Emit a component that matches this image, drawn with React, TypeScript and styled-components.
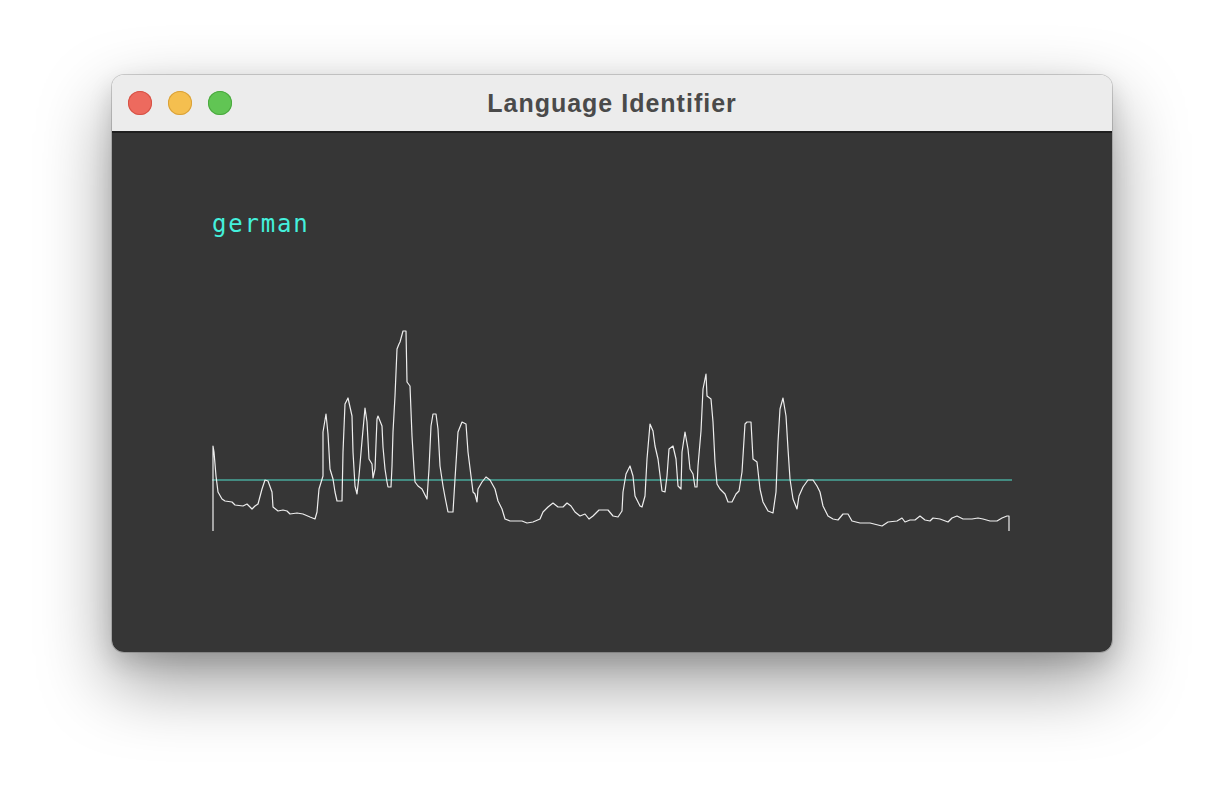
import React from 'react'
import styled, { createGlobalStyle } from 'styled-components'

const GlobalStyle = createGlobalStyle`
    html, body {
        margin: 0;
        padding: 0;
        background: #ffffff;
    }
    * {
        box-sizing: border-box;
    }
`

const StyledDesktop = styled.div`
    width: 1224px;
    height: 800px;
    display: flex;
    justify-content: center;
    align-items: flex-start;
    padding-top: 75px;
    background: #ffffff;
    overflow: hidden;
`

const StyledWindow = styled.div`
    width: 1000px;
    display: flex;
    flex-direction: column;
    border-radius: 12px;
    overflow: hidden;
    box-shadow:
        0 0 0 1px rgba(0, 0, 0, 0.16),
        0 30px 72px rgba(0, 0, 0, 0.4),
        0 10px 24px rgba(0, 0, 0, 0.14);
`

const StyledTitleBar = styled.div`
    position: relative;
    height: 58px;
    display: flex;
    align-items: center;
    justify-content: center;
    background: #ececec;
    border-bottom: 2px solid #1f1f1f;
`

const StyledLights = styled.div`
    position: absolute;
    left: 16px;
    top: 16px;
    display: flex;
    gap: 16px;
`

const StyledLight = styled.span<{ $color: string; $edge: string }>`
    display: block;
    width: 24px;
    height: 24px;
    border-radius: 50%;
    background: ${(p) => p.$color};
    box-shadow: inset 0 0 0 1px ${(p) => p.$edge};
`

const StyledTitle = styled.div`
    font-family: 'Liberation Sans', Arial, sans-serif;
    font-weight: bold;
    font-size: 25px;
    letter-spacing: 1px;
    color: #4a4a4a;
`

const StyledCanvas = styled.div`
    height: 519px;
    background: #363636;
    display: flex;
    flex-direction: column;
    padding: 79px 0 0 88px;
`

const StyledLabel = styled.div`
    margin-left: 12px;
    font-family: 'DejaVu Sans Mono', 'Liberation Mono', monospace;
    font-size: 24px;
    line-height: 24px;
    letter-spacing: 1.8px;
    color: #44f0dc;
`

const StyledChart = styled.svg`
    display: block;
    margin-top: 83px;
`

const wave = [
    [213, 532], [213, 447], [214, 453], [216, 477], [218, 493], [222, 500], [225, 502],
    [232, 503], [235, 506], [243, 507], [247, 505], [252, 510], [255, 507], [258, 505],
    [262, 490], [265, 481], [268, 482], [272, 493], [273, 508], [278, 512], [283, 511],
    [287, 512], [290, 515], [297, 514], [303, 515], [310, 518], [315, 520], [317, 513],
    [319, 490], [323, 477], [323, 433], [326, 415], [328, 435], [330, 470], [333, 480],
    [335, 493], [337, 502], [342, 502], [343, 453], [345, 405], [348, 399], [352, 417],
    [353, 453], [355, 487], [357, 495], [359, 477], [362, 442], [365, 409], [367, 423],
    [369, 460], [372, 465], [373, 479], [375, 470], [377, 420], [378, 417], [382, 427],
    [383, 448], [385, 470], [387, 483], [388, 488], [391, 488], [392, 467], [393, 433],
    [395, 397], [397, 350], [399, 345], [400, 343], [403, 332], [406, 332], [407, 383],
    [410, 387], [412, 437], [414, 470], [415, 483], [418, 487], [422, 490], [427, 500],
    [429, 470], [431, 427], [433, 415], [436, 415], [438, 430], [440, 467], [443, 487],
    [445, 498], [448, 513], [453, 513], [455, 480], [458, 433], [462, 423], [466, 425],
    [468, 453], [471, 477], [473, 493], [475, 495], [477, 503], [478, 490], [482, 483],
    [486, 478], [490, 481], [495, 490], [498, 502], [502, 510], [505, 520], [510, 522],
    [522, 522], [527, 524], [533, 523], [540, 520], [543, 513], [548, 508], [553, 504],
    [558, 508], [563, 508], [567, 504], [571, 507], [575, 513], [580, 517], [585, 515],
    [589, 520], [593, 517], [599, 511], [608, 511], [613, 517], [618, 518], [622, 512],
    [623, 493], [626, 475], [630, 467], [633, 477], [635, 497], [640, 507], [642, 508],
    [645, 497], [647, 460], [650, 425], [653, 432], [655, 447], [658, 460], [662, 492],
    [665, 493], [667, 477], [669, 450], [673, 447], [676, 460], [678, 487], [681, 490],
    [682, 453], [685, 433], [688, 450], [690, 470], [693, 475], [695, 488], [697, 488],
    [698, 467], [701, 432], [703, 390], [706, 375], [707, 397], [711, 400], [713, 423],
    [715, 463], [717, 485], [720, 490], [725, 495], [728, 503], [732, 503], [736, 495],
    [739, 492], [742, 473], [745, 425], [747, 423], [751, 423], [753, 460], [757, 463],
    [760, 490], [763, 503], [768, 512], [773, 514], [776, 493], [778, 443], [780, 410],
    [783, 399], [786, 417], [788, 450], [790, 480], [793, 500], [797, 510], [799, 497],
    [803, 488], [808, 481], [813, 481], [817, 487], [820, 493], [823, 507], [828, 517],
    [833, 520], [838, 521], [843, 515], [848, 515], [852, 522], [860, 524], [870, 524],
    [882, 527], [888, 523], [897, 522], [902, 519], [905, 523], [910, 521], [915, 521],
    [920, 517], [925, 521], [930, 522], [933, 519], [940, 520], [948, 523], [952, 519],
    [957, 517], [963, 520], [972, 520], [978, 519], [983, 520], [990, 522], [997, 522],
    [1002, 519], [1007, 517], [1009, 517], [1009, 532],
]

// chart uses page coordinates through the viewBox offset
const Chart = () => (
    <StyledChart width={820} height={220} viewBox="200 320 820 220">
        <line x1={212} y1={481} x2={1012} y2={481} stroke="#49a89b" strokeWidth={1.6} />
        <polyline
            points={wave.map((p) => p.join(',')).join(' ')}
            fill="none"
            stroke="#eeeeee"
            strokeWidth={1.2}
            strokeLinejoin="round"
        />
    </StyledChart>
)

export default function App() {
    return (
        <>
            <GlobalStyle />
            <StyledDesktop>
                <StyledWindow>
                    <StyledTitleBar>
                        <StyledLights>
                            <StyledLight $color="#ed6a5e" $edge="#d65246" />
                            <StyledLight $color="#f5bf4f" $edge="#d9a13a" />
                            <StyledLight $color="#61c554" $edge="#4ba83f" />
                        </StyledLights>
                        <StyledTitle>Language Identifier</StyledTitle>
                    </StyledTitleBar>
                    <StyledCanvas>
                        <StyledLabel>german</StyledLabel>
                        <Chart />
                    </StyledCanvas>
                </StyledWindow>
            </StyledDesktop>
        </>
    )
}
